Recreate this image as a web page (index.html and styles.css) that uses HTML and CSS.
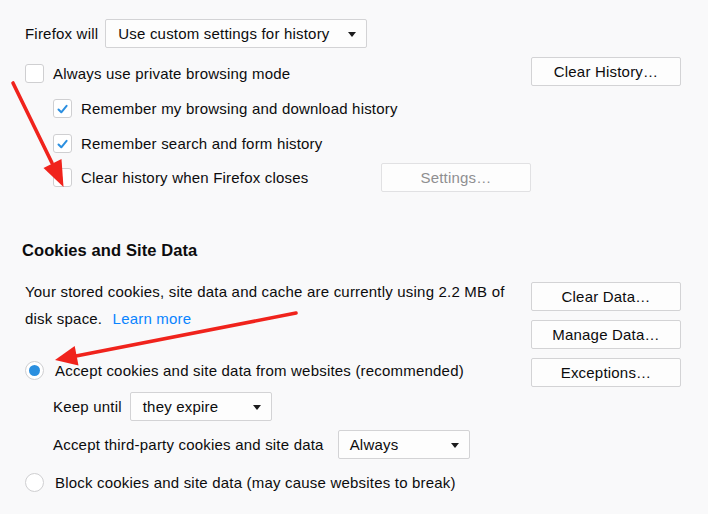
FILE: index.html
```html
<!DOCTYPE html>
<html lang="en">
<head>
<meta charset="utf-8">
<title>Privacy settings</title>
<link rel="stylesheet" href="styles.css">
</head>
<body>
<div class="page">
  <section class="history">
    <div class="mode-row">
      <span class="mode-label">Firefox will</span>
      <div class="select select-mode"><span>Use custom settings for history</span><span class="caret"></span></div>
    </div>

    <div class="row row-private">
      <label class="check check-top"><span class="box"></span><span>Always use private browsing mode</span></label>
      <button class="btn">Clear History…</button>
    </div>

    <div class="row row-sub row-browse">
      <label class="check"><span class="box"><svg class="tick" viewBox="0 0 19 19"><path d="M5.5 10.5 L8.3 13.3 L13.6 6.8"/></svg></span><span>Remember my browsing and download history</span></label>
    </div>

    <div class="row row-sub row-search">
      <label class="check"><span class="box"><svg class="tick" viewBox="0 0 19 19"><path d="M5.5 10.5 L8.3 13.3 L13.6 6.8"/></svg></span><span>Remember search and form history</span></label>
    </div>

    <div class="row row-sub row-clear">
      <label class="check"><span class="box"></span><span>Clear history when Firefox closes</span></label>
      <button class="btn btn-disabled btn-settings">Settings…</button>
    </div>
  </section>

  <section class="cookies">
    <h2 class="heading">Cookies and Site Data</h2>
    <div class="cookies-body">
      <div class="cookies-main">
        <p class="usage">Your stored cookies, site data and cache are currently using 2.2 MB of disk space. <a class="link" href="#">Learn more</a></p>

        <div class="row radio-row radio-accept">
          <label class="radio"><span class="dot dot-on"></span><span>Accept cookies and site data from websites (recommended)</span></label>
        </div>

        <div class="row row-sub sel-row sel-keep">
          <span class="sel-label">Keep until</span>
          <div class="select select-keep"><span>they expire</span><span class="caret"></span></div>
        </div>

        <div class="row row-sub sel-row sel-third">
          <span class="sel-label">Accept third-party cookies and site data</span>
          <div class="select select-third"><span>Always</span><span class="caret"></span></div>
        </div>

        <div class="row radio-row radio-block">
          <label class="radio"><span class="dot"></span><span>Block cookies and site data (may cause websites to break)</span></label>
        </div>
      </div>
      <div class="cookies-buttons">
        <button class="btn">Clear Data…</button>
        <button class="btn">Manage Data…</button>
        <button class="btn">Exceptions…</button>
      </div>
    </div>
  </section>

  <svg class="annot" viewBox="0 0 708 514" aria-hidden="true">
    <line x1="13" y1="83" x2="52" y2="163" class="arrow-line"/>
    <polygon points="61.5,159 43.5,168 63.5,187" class="arrow-head"/>
    <line x1="296" y1="313" x2="76" y2="356" class="arrow-line"/>
    <polygon points="78.5,365.6 74.7,346 55,360" class="arrow-head"/>
  </svg>
</div>
</body>
</html>
```

FILE: styles.css
```css
html, body {
  margin: 0;
  padding: 0;
  background: #f9f9fa;
}

body {
  font-family: "Liberation Sans", Arial, sans-serif;
  font-size: 15px;
  letter-spacing: 0.2px;
  color: #0c0c0d;
}

.page {
  position: relative;
  width: 708px;
  height: 514px;
  overflow: hidden;
  box-sizing: border-box;
  padding: 0 27px 0 25px;
}

/* ---------- history ---------- */
.history {
  padding-top: 19px;
}

.mode-row {
  display: flex;
  align-items: center;
  gap: 7px;
  height: 29px;
}

.row {
  display: flex;
  align-items: center;
}

.row-private {
  margin-top: 9px;
  height: 29px;
  justify-content: space-between;
  align-items: flex-start;
}

.check-top {
  padding-top: 7px;
}

.row-sub {
  padding-left: 28px;
}

.row-browse {
  margin-top: 5px;
  height: 35px;
}

.row-search {
  height: 34px;
}

.row-clear {
  margin-top: 3px;
  height: 29px;
}

.btn-settings {
  margin-left: auto;
  margin-right: 150px;
}

.check,
.radio {
  display: flex;
  align-items: center;
  white-space: nowrap;
}

.check {
  gap: 9px;
}

.radio {
  gap: 11px;
}

.box {
  width: 19px;
  height: 19px;
  box-sizing: border-box;
  border: 1px solid #cfcfd1;
  border-radius: 3px;
  background: #ffffff;
  display: flex;
  flex: none;
}

.tick {
  width: 19px;
  height: 19px;
  margin: -1px;
}

.tick path {
  fill: none;
  stroke: #2b8fe0;
  stroke-width: 2;
  stroke-linecap: round;
  stroke-linejoin: round;
}

.dot {
  width: 19px;
  height: 19px;
  box-sizing: border-box;
  border: 1px solid #cfcfd1;
  border-radius: 50%;
  background: #ffffff;
  flex: none;
  display: flex;
  align-items: center;
  justify-content: center;
}

.dot-on::after {
  content: "";
  width: 11px;
  height: 11px;
  border-radius: 50%;
  background: #2a8fdf;
}

/* ---------- controls ---------- */
.select {
  display: flex;
  align-items: center;
  justify-content: space-between;
  height: 29px;
  box-sizing: border-box;
  border: 1px solid #d3d3d5;
  border-radius: 2px;
  background: #fdfdfd;
  padding: 0 10px 0 12px;
  white-space: nowrap;
}

.select-mode {
  width: 262px;
}

.select-keep {
  width: 142px;
}

.select-third {
  width: 132px;
  padding-left: 11px;
  margin-left: 6px;
}

.caret {
  width: 0;
  height: 0;
  border-left: 4px solid transparent;
  border-right: 4px solid transparent;
  border-top: 5px solid #1b1b1c;
  margin-top: 1px;
}

.btn {
  width: 150px;
  height: 29px;
  box-sizing: border-box;
  border: 1px solid #d3d3d5;
  border-radius: 2px;
  background: #fdfdfd;
  font-family: inherit;
  font-size: 15px;
  letter-spacing: 0.2px;
  color: #0c0c0d;
  padding: 0;
  flex: none;
}

.btn-disabled {
  color: #8f8f91;
  border-color: #e1e1e3;
}

/* ---------- cookies ---------- */
.heading {
  margin: 47px 0 0 -3px;
  font-size: 16.5px;
  font-weight: 700;
  line-height: 22px;
  letter-spacing: 0.1px;
}

.cookies-body {
  display: grid;
  grid-template-columns: 1fr 150px;
  margin-top: 10px;
}

.usage {
  margin: 7px 0 0;
  max-width: 490px;
  line-height: 27px;
}

.link {
  color: #0a84ff;
  text-decoration: none;
  margin-left: 6px;
}

.radio-row {
  height: 29px;
}

.radio-accept {
  margin-top: 24px;
}

.sel-row {
  height: 29px;
  gap: 8px;
}

.sel-keep {
  margin-top: 7px;
}

.sel-third {
  margin-top: 9px;
}

.radio-block {
  margin-top: 9px;
}

.cookies-buttons {
  display: flex;
  flex-direction: column;
  gap: 9px;
  padding-top: 11px;
}

/* ---------- annotation arrows ---------- */
.annot {
  position: absolute;
  left: 0;
  top: 0;
  width: 708px;
  height: 514px;
  pointer-events: none;
}

.arrow-line {
  stroke: #f0231c;
  stroke-width: 3.6;
  stroke-linecap: round;
}

.arrow-head {
  fill: #f0231c;
}
```
